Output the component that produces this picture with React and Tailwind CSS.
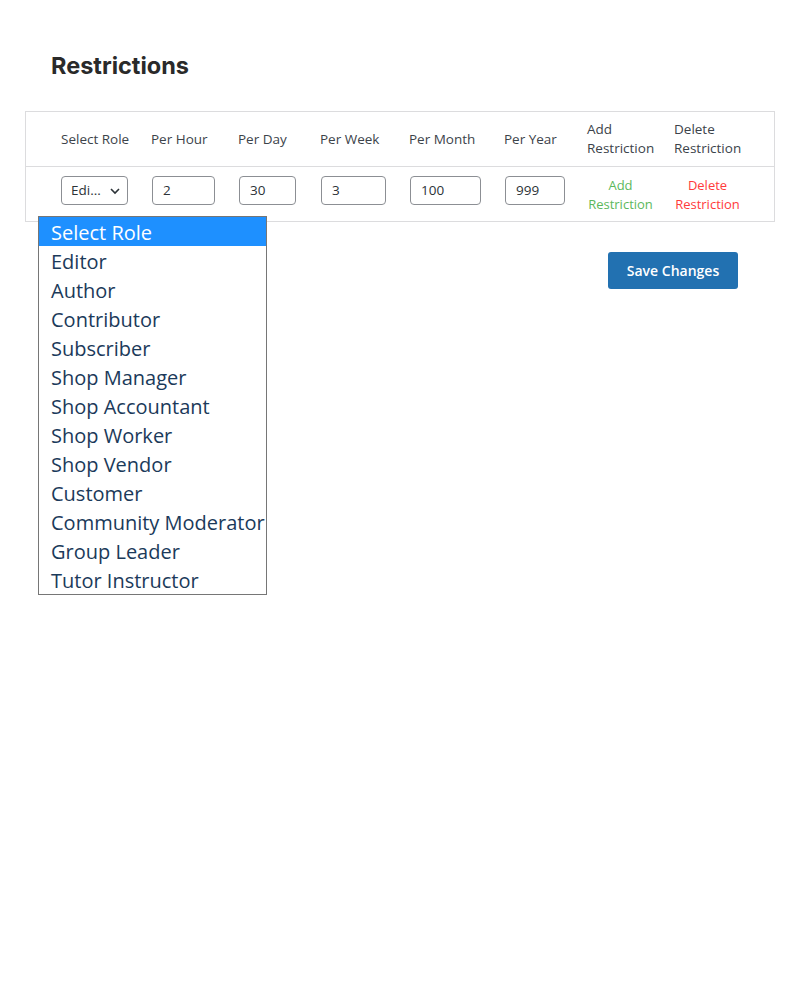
import React from 'react';

const roles = [
  'Select Role',
  'Editor',
  'Author',
  'Contributor',
  'Subscriber',
  'Shop Manager',
  'Shop Accountant',
  'Shop Worker',
  'Shop Vendor',
  'Customer',
  'Community Moderator',
  'Group Leader',
  'Tutor Instructor',
];

const font = { fontFamily: '"Open Sans", "Noto Sans", sans-serif' };

function Field({ value, width }) {
  return (
    <div className={`h-[29px] ${width} border border-[#8c8f94] rounded-[4px] flex items-center px-[10px] text-[13.5px] text-[#2c3338] bg-white`}>
      {value}
    </div>
  );
}

function App() {
  return (
    <div className="w-[800px] h-[1000px] bg-white relative" style={font}>
      <div className="pt-[50px] pl-[51px]">
        <h2 className="text-[23.5px] font-bold text-[#2a2a2a] leading-[32px] font-['Inter',sans-serif]">
          Restrictions
        </h2>
      </div>

      <div className="mx-[25px] mt-[29px] border border-[#dcdcde] text-[13.5px] leading-[19px]">
        <div className="grid grid-cols-[35px_90px_87px_82px_89px_95px_83px_87px_1fr] h-[55px] items-center border-b border-[#dcdcde] text-[#3c434a]">
          <div />
          <div>Select Role</div>
          <div>Per Hour</div>
          <div>Per Day</div>
          <div>Per Week</div>
          <div>Per Month</div>
          <div>Per Year</div>
          <div>Add<br />Restriction</div>
          <div>Delete<br />Restriction</div>
        </div>
        <div className="grid grid-cols-[35px_90px_87px_82px_89px_95px_83px_87px_1fr] h-[54px] items-start pt-[9px]">
          <div />
          <div className="h-[29px] w-[67px] border border-[#8c8f94] rounded-[4px] flex items-center justify-between pl-[9px] pr-[6px] text-[13.5px] text-[#2c3338]">
            <span>Edi...</span>
            <svg width="12" height="12" viewBox="0 0 12 12" fill="none" stroke="#2c3338" strokeWidth="1.6">
              <path d="M2 4l4 4 4-4" />
            </svg>
          </div>
          <div className="pl-px"><Field value="2" width="w-[63px]" /></div>
          <div className="pl-px"><Field value="30" width="w-[57px]" /></div>
          <div className="pl-px"><Field value="3" width="w-[65px]" /></div>
          <div className="pl-px"><Field value="100" width="w-[71px]" /></div>
          <div className="pl-px"><Field value="999" width="w-[60px]" /></div>
          <div className="text-center w-[67px] text-[13px] text-[#5cb85c]">Add<br />Restriction</div>
          <div className="text-center w-[67px] text-[13px] text-[#ff3b3b]">Delete<br />Restriction</div>
        </div>
      </div>

      <div className="flex justify-end pr-[62px] mt-[30px]">
        <button className="h-[37px] w-[130px] bg-[#2271b1] rounded-[3px] text-white text-[14px] font-semibold">
          Save Changes
        </button>
      </div>

      <ul className="absolute left-[38px] top-[216px] w-[229px] border border-[#767676] bg-white text-[20px] text-[#1b3a5a]">
        {roles.map((r, i) => (
          <li
            key={r}
            className={i === 0 ? 'h-[29px] leading-[31px] bg-[#1e90ff] text-white pl-[12px] whitespace-nowrap' : 'h-[29px] leading-[31px] pl-[12px] whitespace-nowrap'}
          >
            {r}
          </li>
        ))}
      </ul>
    </div>
  );
}

export default App;
